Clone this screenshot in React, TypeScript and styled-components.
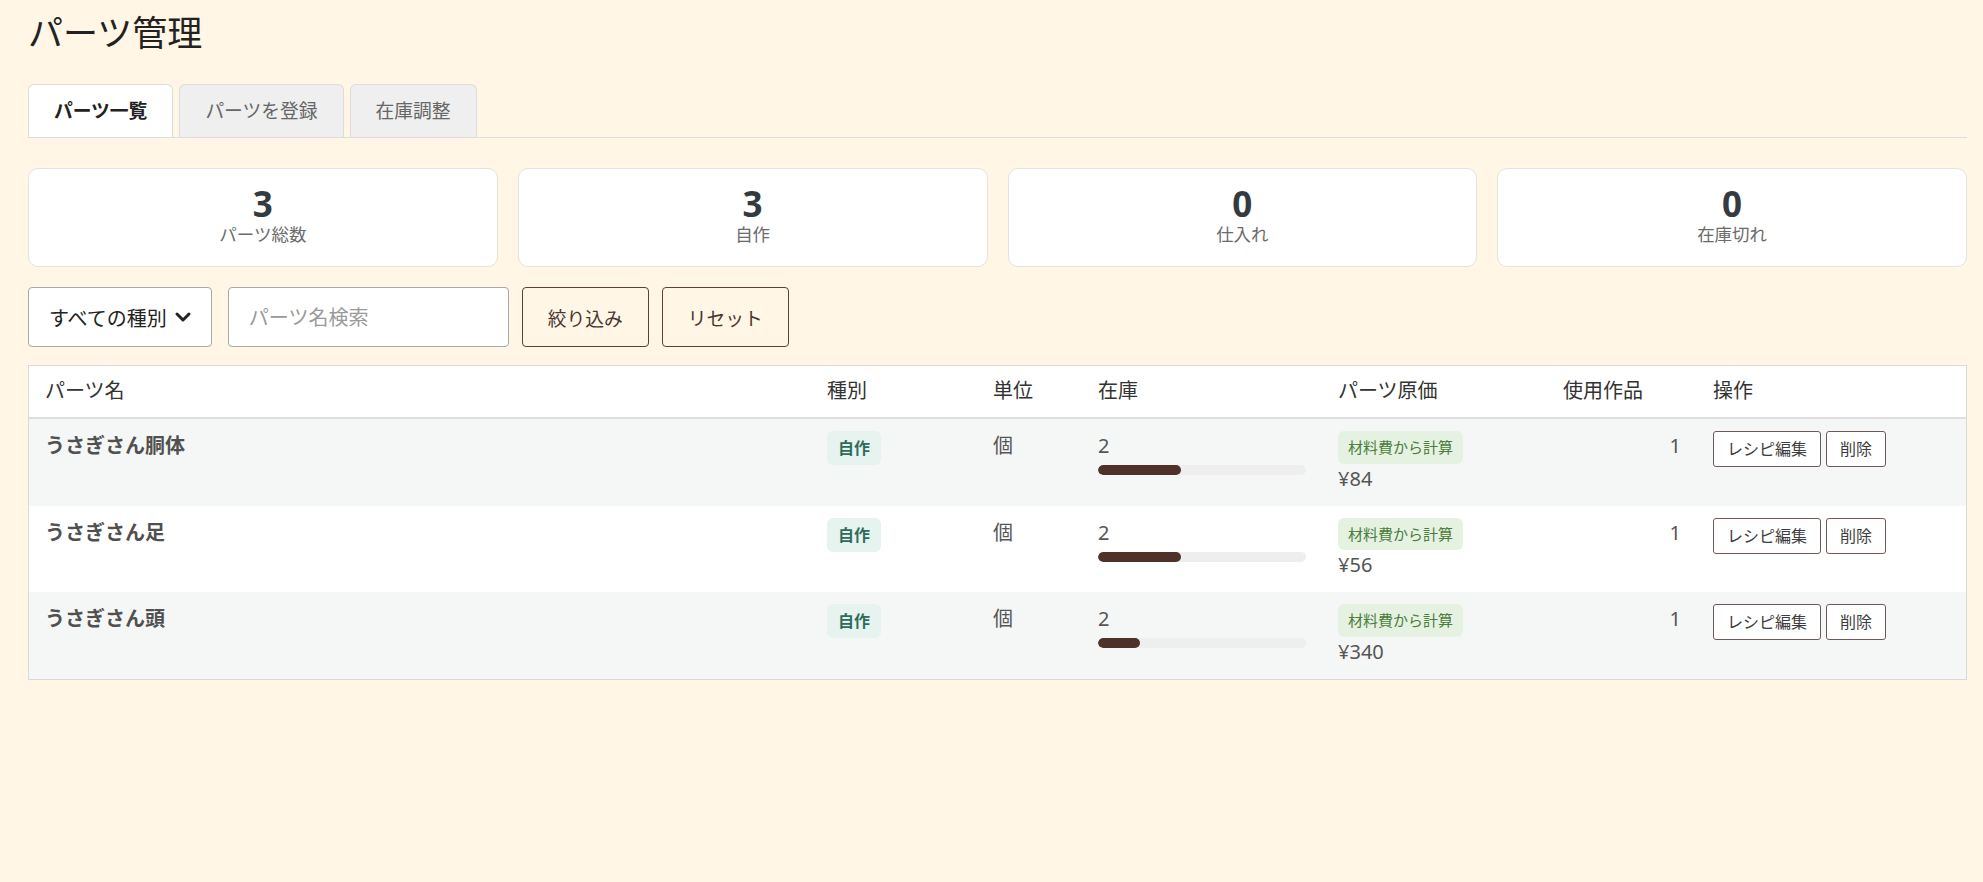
import React from "react";
import styled, { createGlobalStyle } from "styled-components";
import { ChevronDown } from "lucide-react";

const GlobalStyle = createGlobalStyle`
  html, body {
    margin: 0;
    padding: 0;
    background: #fff6e5;
  }
  body {
    font-family: "Noto Sans", "Noto Sans CJK JP", sans-serif;
    color: #333;
  }
  * { box-sizing: border-box; }
`;

const Page = styled.div`
  padding: 12px 16px 40px 28px;
  min-height: 882px;
  background: #fff6e5;
`;

const Title = styled.h1`
  margin: 0;
  font-size: 35px;
  line-height: 42px;
  font-weight: 400;
  color: #222;
`;

const TabBar = styled.div`
  display: flex;
  gap: 6px;
  margin-top: 30px;
  border-bottom: 1px solid #dcdcdc;
`;

const Tab = styled.div<{ $active?: boolean }>`
  padding: 12px 25px;
  font-size: 18.75px;
  line-height: 28px;
  border: 1px solid #dcdcdc;
  border-bottom: none;
  border-radius: 6px 6px 0 0;
  background: ${(p) => (p.$active ? "#ffffff" : "#efefef")};
  color: ${(p) => (p.$active ? "#222" : "#666")};
  font-weight: ${(p) => (p.$active ? 700 : 400)};
`;

const StatGrid = styled.div`
  display: grid;
  grid-template-columns: repeat(4, 1fr);
  gap: 20px;
  margin-top: 30px;
`;

const StatCard = styled.div`
  background: #fff;
  border: 1px solid #e6e3de;
  border-radius: 10px;
  padding: 16px 18px 21px;
  text-align: center;
`;

const StatNumber = styled.div`
  font-size: 35px;
  line-height: 38px;
  font-weight: 700;
  color: #343a40;
`;

const StatLabel = styled.div`
  font-size: 17.5px;
  line-height: 22px;
  color: #6b6b6b;
`;

const FilterRow = styled.div`
  display: flex;
  align-items: center;
  gap: 13px;
  margin-top: 20px;
`;

const SelectBox = styled.div`
  display: flex;
  align-items: center;
  gap: 4px;
  height: 60px;
  padding: 0 16px 0 20px;
  margin-right: 3px;
  background: #fff;
  border: 1px solid #a8a8a8;
  border-radius: 4px;
  font-size: 20px;
  color: #222;
`;

const SearchInput = styled.input`
  width: 281px;
  height: 60px;
  padding: 0 20px;
  background: #fff;
  border: 1px solid #a8a8a8;
  border-radius: 4px;
  font-family: inherit;
  font-size: 20px;
  color: #222;
  outline: none;
  &::placeholder {
    color: #9a9a9a;
  }
`;

const OutlineButton = styled.button`
  height: 60px;
  padding: 0 25px;
  background: transparent;
  border: 1px solid #5d4037;
  border-radius: 4px;
  font-family: inherit;
  font-size: 18.75px;
  color: #4a3530;
`;

const TableWrap = styled.div`
  margin-top: 18px;
  background: #fff;
  border: 1px solid #d9d9d9;
`;

const Table = styled.table`
  width: 100%;
  border-collapse: collapse;
  table-layout: fixed;
`;

const Th = styled.th`
  padding: 10px 16px 11px;
  text-align: left;
  font-weight: 400;
  font-size: 20px;
  line-height: 30px;
  color: #333;
  border-bottom: 2px solid #dedede;
`;

const Tr = styled.tr<{ $alt?: boolean }>`
  background: ${(p) => (p.$alt ? "#f5f7f6" : "#ffffff")};
`;

const Td = styled.td<{ $right?: boolean }>`
  padding: 12px 16px;
  vertical-align: top;
  font-size: 20px;
  line-height: 30px;
  color: #555;
  text-align: ${(p) => (p.$right ? "right" : "left")};
`;

const PartName = styled.span`
  font-weight: 700;
  color: #505050;
`;

const KindBadge = styled.span`
  display: inline-block;
  padding: 5px 11px;
  border-radius: 6px;
  background: #e7f3ef;
  color: #2f6b5b;
  font-size: 16px;
  line-height: 24px;
  font-weight: 700;
`;

const CostBadge = styled.span`
  display: inline-block;
  padding: 5px 10px;
  border-radius: 6px;
  background: #e6f2e1;
  color: #4a7c3c;
  font-size: 15px;
  line-height: 22.5px;
`;

const Price = styled.div`
  line-height: 30px;
`;

const BarTrack = styled.div`
  margin-top: 4px;
  height: 10px;
  border-radius: 5px;
  background: #eeeeee;
  overflow: hidden;
`;

const BarFill = styled.div`
  height: 100%;
  border-radius: 5px;
  background: #4e3129;
`;

const Actions = styled.div`
  display: flex;
  gap: 5px;
`;

const SmallButton = styled.button`
  padding: 5px 13px;
  background: #fff;
  border: 1px solid #6d5a55;
  border-radius: 3px;
  font-family: inherit;
  font-size: 16px;
  line-height: 24px;
  color: #3d3d3d;
`;

type Part = { name: string; stock: number; pct: number; price: string; used: number };

const parts: Part[] = [
  { name: "うさぎさん胴体", stock: 2, pct: 40, price: "¥84", used: 1 },
  { name: "うさぎさん足", stock: 2, pct: 40, price: "¥56", used: 1 },
  { name: "うさぎさん頭", stock: 2, pct: 20, price: "¥340", used: 1 },
];

const stats = [
  { n: 3, label: "パーツ総数" },
  { n: 3, label: "自作" },
  { n: 0, label: "仕入れ" },
  { n: 0, label: "在庫切れ" },
];

export default function App() {
  return (
    <Page>
      <GlobalStyle />
      <Title>パーツ管理</Title>
      <TabBar>
        <Tab $active>パーツ一覧</Tab>
        <Tab>パーツを登録</Tab>
        <Tab>在庫調整</Tab>
      </TabBar>

      <StatGrid>
        {stats.map((s) => (
          <StatCard key={s.label}>
            <StatNumber>{s.n}</StatNumber>
            <StatLabel>{s.label}</StatLabel>
          </StatCard>
        ))}
      </StatGrid>

      <FilterRow>
        <SelectBox>
          すべての種別
          <ChevronDown size={24} strokeWidth={3} color="#222" />
        </SelectBox>
        <SearchInput placeholder="パーツ名検索" />
        <OutlineButton>絞り込み</OutlineButton>
        <OutlineButton>リセット</OutlineButton>
      </FilterRow>

      <TableWrap>
        <Table>
          <colgroup>
            <col style={{ width: 782 }} />
            <col style={{ width: 166 }} />
            <col style={{ width: 105 }} />
            <col style={{ width: 240 }} />
            <col style={{ width: 225 }} />
            <col style={{ width: 150 }} />
            <col />
          </colgroup>
          <thead>
            <tr>
              <Th>パーツ名</Th>
              <Th>種別</Th>
              <Th>単位</Th>
              <Th>在庫</Th>
              <Th>パーツ原価</Th>
              <Th>使用作品</Th>
              <Th>操作</Th>
            </tr>
          </thead>
          <tbody>
            {parts.map((p, i) => (
              <Tr key={p.name} $alt={i % 2 === 0}>
                <Td>
                  <PartName>{p.name}</PartName>
                </Td>
                <Td>
                  <KindBadge>自作</KindBadge>
                </Td>
                <Td>個</Td>
                <Td>
                  {p.stock}
                  <BarTrack>
                    <BarFill style={{ width: `${p.pct}%` }} />
                  </BarTrack>
                </Td>
                <Td>
                  <CostBadge>材料費から計算</CostBadge>
                  <Price>{p.price}</Price>
                </Td>
                <Td $right>{p.used}</Td>
                <Td>
                  <Actions>
                    <SmallButton>レシピ編集</SmallButton>
                    <SmallButton>削除</SmallButton>
                  </Actions>
                </Td>
              </Tr>
            ))}
          </tbody>
        </Table>
      </TableWrap>
    </Page>
  );
}
